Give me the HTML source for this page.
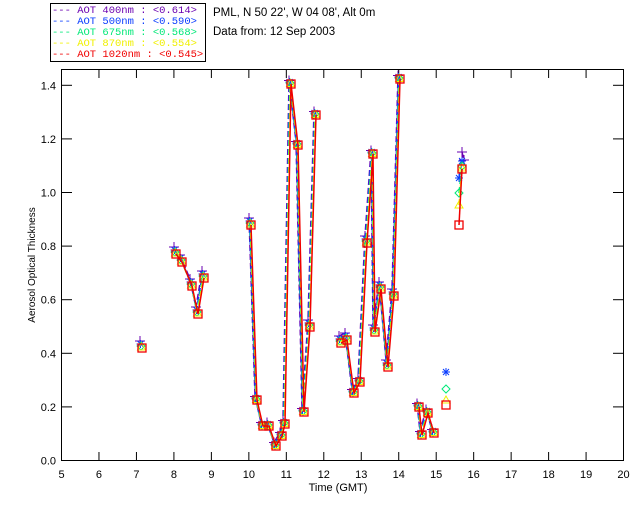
<!DOCTYPE html>
<html><head><meta charset="utf-8"><style>
body{margin:0;background:#fff;width:640px;height:512px;overflow:hidden}
svg{display:block;font-family:"Liberation Sans",sans-serif}
</style></head><body>
<svg id="s" width="640" height="512" xmlns="http://www.w3.org/2000/svg">
<rect x="50.5" y="3.5" width="155" height="58" fill="#fff" stroke="#000"/>
<g font-size="10.5" font-family="Liberation Mono,monospace">
<text x="52" y="13" fill="#6a00b0">--- AOT  400nm : &lt;0.614&gt;</text>
<text x="52" y="24" fill="#0a3cff">--- AOT  500nm : &lt;0.590&gt;</text>
<text x="52" y="35" fill="#00e878">--- AOT  675nm : &lt;0.568&gt;</text>
<text x="52" y="46" fill="#f0f000">--- AOT  870nm : &lt;0.554&gt;</text>
<text x="52" y="57" fill="#f00000">--- AOT 1020nm : &lt;0.545&gt;</text>
</g>
<g font-size="11.5">
<text x="213" y="16" fill="#000">PML, N 50 22', W 04 08', Alt 0m</text>
<text x="213" y="35" fill="#000">Data from: 12 Sep 2003</text>
</g>
<rect x="61.5" y="69.5" width="562" height="391" fill="none" stroke="#000"/>
<g id="ax" stroke="#000"></g>
<g id="lab" font-size="11" fill="#000"></g>
<text x="338" y="491" font-size="11" text-anchor="middle">Time (GMT)</text>
<text transform="translate(35,265) rotate(-90)" font-size="10" text-anchor="middle">Aerosol Optical Thickness</text>
<g id="d"></g>
</svg>
<script>
var NS="http://www.w3.org/2000/svg";
function el(p,t,a,txt){var e=document.createElementNS(NS,t);for(var k in a)e.setAttribute(k,a[k]);if(txt!=null)e.textContent=txt;document.getElementById(p).appendChild(e);return e;}
for(var h=5;h<=20;h++){var x=61.5+(h-5)*37.47;
 if(h>5&&h<20){el('ax','line',{x1:x,y1:460,x2:x,y2:452});el('ax','line',{x1:x,y1:70,x2:x,y2:78});}
 el('lab','text',{x:x,y:478,'text-anchor':'middle'},h);}
for(var i=0;i<=7;i++){var y=460.5-i*53.6;var v=(i*0.2).toFixed(1);
 if(i>0){el('ax','line',{x1:62,y1:y,x2:72,y2:y});el('ax','line',{x1:613,y1:y,x2:623,y2:y});}
 el('lab','text',{x:56,y:y+4,'text-anchor':'end'},v);}
var G=[[[142,348]],
[[176,254],[182,262],[192,286],[198,314],[204,278]],
[[251,225],[257,400],[263,426],[269,426],[276,446],[282,436],[285,424],[291,84],[298,145],[304,412],[310,327],[316,115]],
[[341,343],[347,340],[354,393],[360,382],[367,243],[373,154],[375,332],[381,289],[388,367],[394,296],[400,79]],
[[419,407],[422,435],[428,413],[434,433]]];
var S=[{c:"#6a00b0",dy:-7,m:"plus"},{c:"#0a3cff",dy:-4,m:"star"},{c:"#00e878",dy:-2,m:"dia"},{c:"#f0f000",dy:-1,m:"tri"},{c:"#f00000",dy:0,m:"sq"}];
var EX=[
 [null,[[446,372]],[[446,389]],[[446,400]],[[446,405]]],
 [[[462,152],[464,160]],[[459,178],[462,161]],[[459,193],[462,166]],[[459,205],[462,168]],[[459,225],[462,169]]]
];
function mark(s,x,y){
 if(s.m=="plus")el('d','path',{d:"M"+(x-5)+" "+y+"h10M"+x+" "+(y-5)+"v10",stroke:s.c,fill:'none'});
 if(s.m=="star")el('d','path',{d:"M"+(x-4)+" "+y+"h8M"+x+" "+(y-4)+"v8M"+(x-3)+" "+(y-3)+"l6 6M"+(x+3)+" "+(y-3)+"l-6 6",stroke:s.c,fill:'none'});
 if(s.m=="dia")el('d','path',{d:"M"+x+" "+(y-4)+"l4 4l-4 4l-4 -4z",stroke:s.c,fill:'none'});
 if(s.m=="tri")el('d','path',{d:"M"+x+" "+(y-4)+"l4 7h-8z",stroke:s.c,fill:'none'});
 if(s.m=="sq")el('d','rect',{x:x-4,y:y-4,width:8,height:8,stroke:s.c,fill:'none','stroke-width':1.3});
}
S.forEach(function(s,si){
 var groups=G.map(function(g){return g.map(function(p){var dy=p[1]>380||p[1]<200?s.dy*0.5:s.dy;return [p[0]+(si-4)*0.5,p[1]+dy];});});
 EX.forEach(function(e){if(e[si])groups.push(e[si]);});
 groups.forEach(function(pts){
  if(pts.length>1)el('d','polyline',{points:pts.join(' '),fill:'none',stroke:s.c,'stroke-width':1.5,'stroke-dasharray':si<4?'6,3':'none'});
  pts.forEach(function(p){mark(s,p[0],p[1]);});
 });
});
</script>
</body></html>
